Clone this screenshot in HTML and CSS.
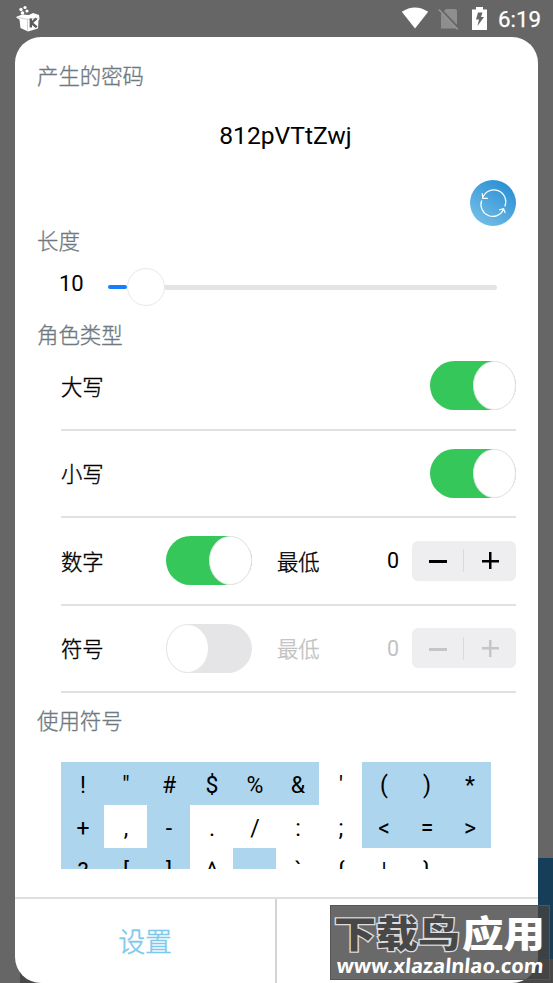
FILE: index.html
```html
<!DOCTYPE html>
<html lang="zh-CN">
<head>
<meta charset="utf-8">
<title>密码</title>
<link rel="stylesheet" href="styles.css">
</head>
<body>
<header class="status">
  <svg class="app-icon" width="26" height="27" viewBox="0 0 26 27" fill="#fff">
    <path d="M1 12l6-2.500 7 .5 4-2 6 2 .5 4-1 1.500-.5 8-10 3-7.500-3.500-1-8.500-2.500-1.500z"/>
    <circle cx="6" cy="4.500" r="1.700"/><circle cx="10" cy="2.500" r="1.600"/><circle cx="12" cy="6" r="1.600"/><circle cx="7.500" cy="8" r="1.800"/>
    <path d="M3 12.500l9.500 1.800 11-1M12.500 14.500v11" fill="none" stroke="#c4c4c4" stroke-width=".8"/>
    <path d="M15.800 13.500v9M21.500 13.300l-5 4.700 5.200 4.200" fill="none" stroke="#5c5c5c" stroke-width="2.400"/>
  </svg>
  <span class="grow"></span>
  <svg class="wifi" width="28" height="22" viewBox="0 0 28 22"><path d="M.8 4.800Q14-4 27.200 4.800L14 21.500z" fill="#fff"/></svg>
  <svg class="sim" width="21" height="23" viewBox="0 0 21 23"><path d="M8 1h9q2 0 2 2v17.500H3V6z" fill="#8e8e8e"/><path d="M2 .5l19 20" stroke="#666" stroke-width="2"/><path d="M.8 1.500l19 20" stroke="#949494" stroke-width="1.700"/></svg>
  <svg class="battery" width="15" height="23" viewBox="0 0 15 23"><path d="M4 0h7v2.500h4V23H0V2.500h4z" fill="#fff"/><path d="M6 5.500h4.500L9 10h3l-6.500 9L7 12.500H4z" fill="#666"/></svg>
  <span class="clock">6:19</span>
</header>
<main class="card">
  <h2 class="label first">产生的密码</h2>
  <div class="password">812pVTtZwj</div>
  <div class="refresh-row">
    <button class="refresh" aria-label="刷新"><svg width="46" height="46" viewBox="0 0 46 46" fill="none" stroke="#fff" stroke-width="1.200"><path d="M34.800 26.500A11.800 11.800 0 0 0 13 17M11.700 20.500A11.800 11.800 0 0 0 33.500 29.500M12.200 13.300l.6 5h5M29.200 29.800l4.400-1.100 1.600 4.300"/></svg></button>
  </div>
  <h2 class="label length">长度</h2>
  <div class="slider-row"><span class="value">10</span><div class="track"><i class="fill"></i><i class="thumb"></i><i class="rest"></i></div></div>
  <h2 class="label types">角色类型</h2>
  <section class="options">
    <div class="row"><span class="name">大写</span><span class="grow"></span><i class="switch on"></i></div>
    <div class="row"><span class="name">小写</span><span class="grow"></span><i class="switch on"></i></div>
    <div class="row"><span class="name wide">数字</span><i class="switch on"></i><span class="min">最低</span><span class="grow"></span><span class="count">0</span><div class="stepper"><i class="minus"></i><i class="sep"></i><i class="plus"></i></div></div>
    <div class="row off"><span class="name wide">符号</span><i class="switch"></i><span class="min">最低</span><span class="grow"></span><span class="count">0</span><div class="stepper"><i class="minus"></i><i class="sep"></i><i class="plus"></i></div></div>
  </section>
  <h2 class="label symbols-label">使用符号</h2>
  <div class="symbols">
    <b class="s">!</b><b class="s">"</b><b class="s">#</b><b class="s">$</b><b class="s">%</b><b class="s">&amp;</b><b>'</b><b class="s">(</b><b class="s">)</b><b class="s">*</b>
    <b class="s">+</b><b>,</b><b class="s">-</b><b>.</b><b>/</b><b>:</b><b>;</b><b class="s">&lt;</b><b class="s">=</b><b class="s">&gt;</b>
    <b class="s">?</b><b class="s">[</b><b class="s">]</b><b>^</b><b class="s">_</b><b>`</b><b>{</b><b>|</b><b>}</b>
  </div>
  <footer class="actions"><div class="action">设置</div><div class="action"></div></footer>
</main>
<div class="backdrop-button"></div>
<div class="backdrop-corner"></div>
<div class="watermark">
  <svg width="220" height="75" viewBox="0 0 220 75">
    <g class="mark-cn"><text class="dark" x="4" y="43" textLength="126" lengthAdjust="spacingAndGlyphs">下载鸟</text><text class="light" x="132" y="43" textLength="83" lengthAdjust="spacingAndGlyphs">应用</text></g>
    <text class="mark-url" transform="translate(6 68) skewX(-5)" textLength="207" lengthAdjust="spacingAndGlyphs">www.xlazalnlao.com</text>
  </svg>
</div>
</body>
</html>
```
FILE: styles.css
```css
* { box-sizing: border-box; }
body { margin: 0; height: 983px; overflow: hidden; position: relative; background: #666; color: #000; font-family: Roboto, "Noto Sans CJK SC", sans-serif; font-size: 21.3px; }
.grow { flex: 1; }
.status { height: 37px; padding: 0 13px 0 15px; display: flex; align-items: flex-start; color: #fff; }
.app-icon { margin-top: 5px; }
.wifi { margin: 7px 9px 0 0; }
.sim { margin: 8px 13px 0 0; }
.battery { margin: 7px 11px 0 0; }
.clock { width: 42px; font-size: 22.3px; font-weight: 400; -webkit-text-stroke: .25px #fff; line-height: 39px; white-space: nowrap; }
.card { position: relative; z-index: 1; width: 522.5px; height: 946px; margin-left: 15px; padding: 0 21.5px 0 22px; background: #fff; border-radius: 26px; overflow: hidden; display: flex; flex-direction: column; }
.label { margin: 0; height: 32px; line-height: 32px; font-size: 21.4px; font-weight: 300; -webkit-text-stroke: .35px #6f797f; color: #6f797f; flex: none; }
.first { margin-top: 24px; }
.password { height: 34px; margin: 26px 0 0 18px; line-height: 34px; font-size: 24.6px; text-align: center; }
.refresh-row { display: flex; justify-content: flex-end; margin-top: 27px; height: 46px; }
.refresh { width: 46px; height: 46px; padding: 0; border: 0; border-radius: 50%; background: linear-gradient(215deg, #1f88d2, #7dc5e8); }
.refresh svg { display: block; }
.slider-row { display: flex; align-items: center; height: 38px; margin: 10px 19px 0 22px; }
.value { width: 48.5px; line-height: 30px; margin-top: -7px; font-size: 22px; }
.track { flex: 1; display: flex; align-items: center; }
.fill { width: 19px; height: 4px; border-radius: 2px; background: #147efb; }
.thumb { width: 38px; height: 38px; border-radius: 50%; border: 1px solid #e8e8e8; background: #fff; }
.rest { flex: 1; height: 5px; border-radius: 0 3px 3px 0; background: #e4e4e5; }
.types { margin-top: 14px; }
.options { margin: -9px 0 0 24px; }
.row { height: 87.5px; border-bottom: 2px solid #e0e1e3; display: flex; align-items: center; }
.name, .min { font-weight: 300; -webkit-text-stroke: .4px currentColor; }
.name { margin-top: -1px; }
.wide { width: 105px; }
.switch { flex: none; width: 86px; height: 49px; border-radius: 25px; background: #e5e5e7; display: flex; }
.switch::after { content: ""; box-sizing: border-box; width: 43px; height: 49px; border-radius: 50%; border: .5px solid #e6e6e6; background: #fff; }
.switch.on { background: #35c759; justify-content: flex-end; }
.min { margin: -1px 0 0 25px; }
.count { margin-right: 13px; font-size: 21.5px; }
.stepper { width: 104px; height: 40px; border-radius: 6px; background: #eeeef0; display: grid; grid-template-columns: 51px 1px 52px; align-items: center; justify-items: center; }
.minus { width: 18px; height: 3px; margin-top: 2px; background: #000; }
.sep { width: 1px; height: 23px; background: #dadadc; }
.plus { width: 17px; height: 17px; background: linear-gradient(#000, #000) center / 17px 2.5px no-repeat, linear-gradient(#000, #000) center / 2.5px 17px no-repeat; }
.off .min, .off .count { color: #c2c2c2; }
.off .minus { background: #c5c5c7; }
.off .plus { background: linear-gradient(#c5c5c7, #c5c5c7) center / 17px 2.5px no-repeat, linear-gradient(#c5c5c7, #c5c5c7) center / 2.5px 17px no-repeat; }
.symbols-label { margin-top: 13px; }
.symbols { flex: none; height: 107px; margin: 23.5px 0 0 24px; overflow: hidden; display: grid; grid-template-columns: repeat(10, 43px); grid-auto-rows: 43px; }
.symbols b { font-weight: 400; font-size: 23px; line-height: 47px; height: 43px; padding-left: 1px; text-align: center; }
.symbols .s { background: #aed5ee; }
.actions { flex: 1; margin: 28px -21.5px 0 -22px; border-top: 2px solid #dddfe1; display: flex; }
.action { flex: 1; display: flex; align-items: center; justify-content: center; font-size: 27px; font-weight: 300; -webkit-text-stroke: .4px #7dc8ec; color: #7dc8ec; }
.action + .action { border-left: 2px solid #d3d4d7; }
.backdrop-button { position: absolute; left: 520px; right: 0; top: 858px; height: 101px; background: #173e58; }
.backdrop-corner { position: absolute; left: 20px; width: 533px; top: 959px; bottom: 0; background: #484848; }
.watermark { position: absolute; z-index: 2; left: 330px; top: 905px; width: 220px; height: 75px; background: rgba(68, 68, 68, .8); border: 1px solid #555; }
.watermark svg { display: block; margin: -1px; }
.mark-cn { font: 900 37px "Noto Sans CJK SC", sans-serif; paint-order: stroke; }
.dark { fill: #484848; stroke: #ddd; stroke-width: 2.5px; }
.light { fill: #fff; }
.mark-url { font: 700 20px "Noto Sans", sans-serif; fill: #fff; }
```
